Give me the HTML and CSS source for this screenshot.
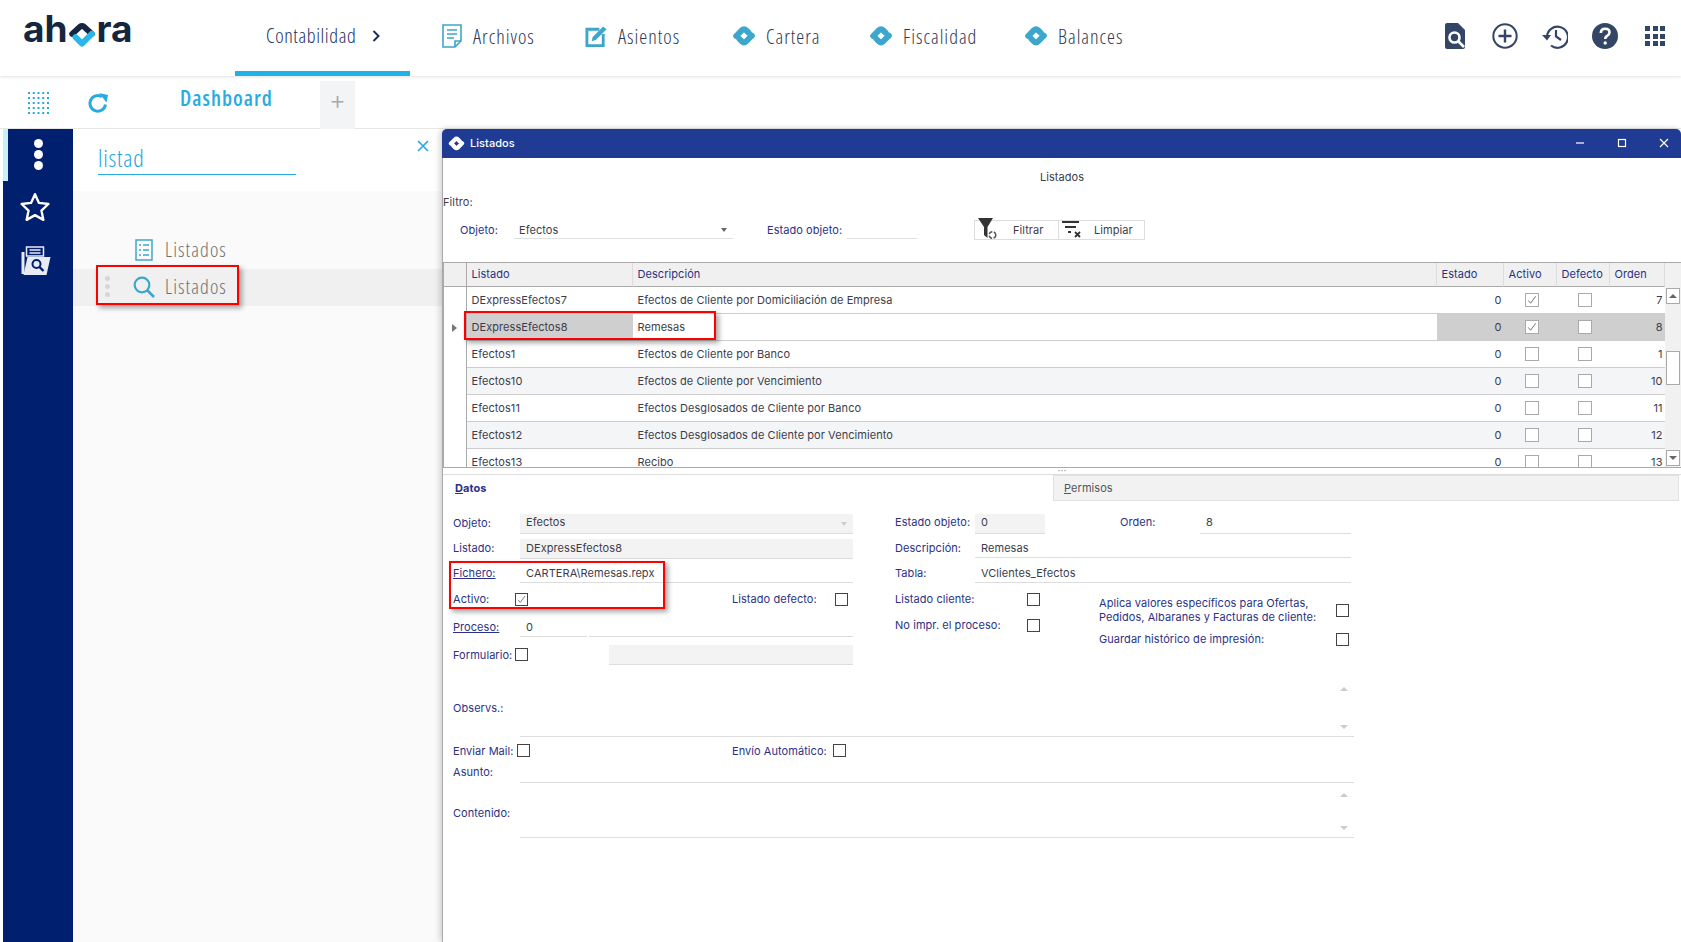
FILE: index.html
```html
<!DOCTYPE html>
<html lang="es">
<head>
<meta charset="utf-8">
<title>ahora - Listados</title>
<link rel="stylesheet" href="styles.css">
</head>
<body>
<svg class="defs" width="0" height="0" aria-hidden="true">
  <symbol id="dia" viewBox="0 0 24 24"><path d="M4.200 12 10 6.200Q12 4.200 14 6.200L16.500 8.700M7.500 15 10 17.500Q12 19.500 14 17.500L19.800 11.700" fill="none" stroke="currentColor" stroke-width="6" stroke-linecap="round" stroke-linejoin="round"/></symbol>
  <symbol id="chk" viewBox="0 0 13 13"><path d="M2.500 7 5 10 10.500 2.500" fill="none" stroke="#666" stroke-width="1"/></symbol>
</svg>
<header class="top">
  <div class="logo"><span>ah</span><svg class="logo-o" viewBox="0 0 24 24"><path d="M3 11 10 4.500Q12 3 14 4.500L21 11" fill="none" stroke="#14273f" stroke-width="5.500" stroke-linecap="round" stroke-linejoin="round"/><path d="M6 14 12 20 21 11" fill="none" stroke="#29b6e8" stroke-width="5.500" stroke-linecap="round" stroke-linejoin="round"/></svg><span>ra</span></div>
  <nav class="nav">
    <a class="nav-active">Contabilidad <svg class="chev" viewBox="0 0 8 12"><path d="M1.500 1 6.500 6 1.500 11" fill="none" stroke="#1c2f5e" stroke-width="2"/></svg></a>
    <a class="nav-i n1"><svg class="ic-file" viewBox="0 0 20 24"><path d="M1 1H19V17L13 23H1Z M13 23V17H19" fill="none" stroke="#3ca6cc" stroke-width="1.600"/><path d="M5 6H15M5 10H15M5 14H12" stroke="#3ca6cc" stroke-width="1.600"/></svg>Archivos</a>
    <a class="nav-i n2"><svg class="ic-edit" viewBox="0 0 24 24"><path d="M15 5H2V22H19V10" fill="none" stroke="#3ca6cc" stroke-width="3"/><path d="M8 13 19 2 22.500 5 11.500 16 7 17.500Z" fill="#3ca6cc"/></svg>Asientos</a>
    <a class="nav-i n3"><svg class="ic-dia"><use href="#dia"/></svg>Cartera</a>
    <a class="nav-i n4"><svg class="ic-dia"><use href="#dia"/></svg>Fiscalidad</a>
    <a class="nav-i n5"><svg class="ic-dia"><use href="#dia"/></svg>Balances</a>
  </nav>
  <div class="tools">
    <svg class="t-doc" viewBox="0 0 20 26"><path d="M2 0H13L20 7V24Q20 26 18 26H2Q0 26 0 24V2Q0 0 2 0Z" fill="#344666"/><circle cx="9.500" cy="14.500" r="5" fill="none" stroke="#fff" stroke-width="2.600"/><path d="M13 18 19 24" stroke="#fff" stroke-width="2.600"/></svg>
    <svg class="t-ic" viewBox="0 0 26 26"><circle cx="13" cy="13" r="11.700" fill="none" stroke="#344666" stroke-width="2"/><path d="M13 6.500V19.500M6.500 13H19.500" stroke="#344666" stroke-width="2.400"/></svg>
    <svg class="t-ic" viewBox="0 0 26 26"><path d="M5 14A10.500 10.500 0 1 1 9 22.500" fill="none" stroke="#344666" stroke-width="2.200"/><path d="M0 12H9L5 17.500Z" fill="#344666"/><path d="M14 7V13.500L19 17" fill="none" stroke="#344666" stroke-width="2.200"/></svg>
    <svg class="t-ic" viewBox="0 0 26 26"><circle cx="13" cy="13" r="13" fill="#344666"/><path d="M8.800 10Q9 5.800 13.200 5.800 17.500 5.800 17.500 9.500 17.500 11.500 15 13 13.200 14 13.200 16" fill="none" stroke="#fff" stroke-width="2.600"/><circle cx="13.200" cy="20" r="1.700" fill="#fff"/></svg>
    <div class="apps"><i></i><i></i><i></i><i></i><i></i><i></i><i></i><i></i><i></i></div>
  </div>
</header>
<div class="subbar">
  <svg class="sb-grid" viewBox="0 0 23 22"><path d="M1 1H22M1 6H22M1 11H22M1 16H22M1 21H22" stroke="#29abe2" stroke-width="2" stroke-dasharray="2 2.750"/></svg>
  <svg class="sb-ref" viewBox="0 0 20 20"><path d="M17.500 11.500A7.800 7.800 0 1 1 14 3.800" fill="none" stroke="#29abe2" stroke-width="3"/><path d="M11 0 20 2 18.500 9.500Z" fill="#29abe2"/></svg>
  <div class="tab-dash">Dashboard</div>
  <div class="tab-plus">+</div>
</div>
<main class="main">
  <aside class="rail">
    <div class="rail-dots"><i></i><i></i><i></i></div>
    <svg class="rail-star" viewBox="0 0 28 28"><path d="M14 2 17.700 10.200 26.500 11.200 20 17.300 21.800 26 14 21.600 6.200 26 8 17.300 1.500 11.200 10.300 10.200Z" fill="none" stroke="#fff" stroke-width="2.200" stroke-linejoin="round"/></svg>
    <svg class="rail-fold" viewBox="0 0 30 30"><path d="M1 6H4V28H1Z" fill="#e8ebf3"/><path d="M6 1H23V10H6Z" fill="none" stroke="#e8ebf3" stroke-width="1.500"/><path d="M9 4H20M9 7H20" stroke="#e8ebf3" stroke-width="1.500"/><path d="M7 11H30L26 29H3Z" fill="#e8ebf3"/><circle cx="16" cy="18" r="4" fill="none" stroke="#001f6f" stroke-width="2"/><path d="M19 21 23 25" stroke="#001f6f" stroke-width="2.400"/></svg>
  </aside>
  <section class="search">
    <div class="search-head">
      <div class="search-input">listad</div>
      <svg class="search-x" viewBox="0 0 12 12"><path d="M1 1 11 11M11 1 1 11" stroke="#29abe2" stroke-width="1.700"/></svg>
    </div>
    <div class="search-body">
      <div class="res">
        <svg class="res-list" viewBox="0 0 18 22"><rect x="1" y="1" width="16" height="20" fill="none" stroke="#3ca6cc" stroke-width="1.500"/><path d="M4 6H6M8 6H14M4 11H6M8 11H14M4 16H6M8 16H14" stroke="#3ca6cc" stroke-width="1.500"/></svg>
        <span>Listados</span>
      </div>
      <div class="res res-sel">
        <div class="grip"><i></i><i></i><i></i></div>
        <svg class="res-mag" viewBox="0 0 22 22"><circle cx="9" cy="9" r="7.300" fill="none" stroke="#3ca6cc" stroke-width="2.200"/><path d="M14 14 21 21" stroke="#3ca6cc" stroke-width="2.600"/></svg>
        <span>Listados</span>
      </div>
    </div>
  </section>
  <section class="win">
    <div class="win-title">
      <svg class="win-ic"><use href="#dia"/></svg>
      <span class="win-name">Listados</span>
      <div class="win-ctl">
        <svg viewBox="0 0 10 10"><path d="M1 5H9" stroke="#fff" stroke-width="1.200"/></svg>
        <svg viewBox="0 0 10 10"><rect x="1.500" y="1.500" width="7" height="7" fill="none" stroke="#fff" stroke-width="1.200"/></svg>
        <svg viewBox="0 0 10 10"><path d="M1 1 9 9M9 1 1 9" stroke="#fff" stroke-width="1.200"/></svg>
      </div>
    </div>
    <div class="win-cap">Listados</div>
    <div class="filtro">Filtro:</div>
    <div class="fbar">
      <span class="lb fb-l1">Objeto:</span>
      <span class="fb-sel">Efectos<i class="caret"></i></span>
      <span class="lb fb-l2">Estado objeto:</span>
      <span class="fb-est"></span>
      <div class="btns">
        <button class="btn btn-a"><svg class="btn-ic" viewBox="0 0 20 22"><path d="M0 0H15L9.500 9V20L6 17V9Z" fill="#333"/><circle cx="14.500" cy="17" r="3.300" fill="none" stroke="#555" stroke-width="1.500" stroke-dasharray="4 1.500"/></svg><span>Filtrar</span></button>
        <button class="btn btn-b"><svg class="btn-ic" viewBox="0 0 20 22"><path d="M0 4H17M3 9H14M6 14H9" stroke="#333" stroke-width="1.800"/><path d="M13 14 18 19M18 14 13 19" stroke="#333" stroke-width="1.800"/></svg><span>Limpiar</span></button>
      </div>
    </div>
    <div class="grid">
      <div class="grid-main">
        <div class="g-row g-head">
          <div class="c"></div><div class="c">Listado</div><div class="c">Descripción</div><div class="c">Estado</div><div class="c">Activo</div><div class="c">Defecto</div><div class="c">Orden</div>
        </div>
        <div class="g-row">
          <div class="c ind"></div><div class="c">DExpressEfectos7</div><div class="c">Efectos de Cliente por Domiciliación de Empresa</div><div class="c r">0</div><div class="c m"><span class="cb"><svg><use href="#chk"/></svg></span></div><div class="c m"><span class="cb"></span></div><div class="c r">7</div>
        </div>
        <div class="g-row g-sel">
          <div class="c ind"><i class="tri"></i></div><div class="c s">DExpressEfectos8</div><div class="c">Remesas</div><div class="c r s">0</div><div class="c m s"><span class="cb"><svg><use href="#chk"/></svg></span></div><div class="c m s"><span class="cb"></span></div><div class="c r s">8</div>
        </div>
        <div class="g-row">
          <div class="c ind"></div><div class="c">Efectos1</div><div class="c">Efectos de Cliente por Banco</div><div class="c r">0</div><div class="c m"><span class="cb"></span></div><div class="c m"><span class="cb"></span></div><div class="c r">1</div>
        </div>
        <div class="g-row g-alt">
          <div class="c ind"></div><div class="c">Efectos10</div><div class="c">Efectos de Cliente por Vencimiento</div><div class="c r">0</div><div class="c m"><span class="cb"></span></div><div class="c m"><span class="cb"></span></div><div class="c r">10</div>
        </div>
        <div class="g-row">
          <div class="c ind"></div><div class="c">Efectos11</div><div class="c">Efectos Desglosados de Cliente por Banco</div><div class="c r">0</div><div class="c m"><span class="cb"></span></div><div class="c m"><span class="cb"></span></div><div class="c r">11</div>
        </div>
        <div class="g-row g-alt">
          <div class="c ind"></div><div class="c">Efectos12</div><div class="c">Efectos Desglosados de Cliente por Vencimiento</div><div class="c r">0</div><div class="c m"><span class="cb"></span></div><div class="c m"><span class="cb"></span></div><div class="c r">12</div>
        </div>
        <div class="g-row">
          <div class="c ind"></div><div class="c">Efectos13</div><div class="c">Recibo</div><div class="c r">0</div><div class="c m"><span class="cb"></span></div><div class="c m"><span class="cb"></span></div><div class="c r">13</div>
        </div>
      </div>
      <div class="vbar">
        <div class="vb-btn"><i class="up"></i></div>
        <div class="vb-thumb"></div>
        <div class="vb-btn vb-end"><i class="down"></i></div>
      </div>
    </div>
    <div class="split">···</div>
    <div class="tabs">
      <div class="tab tab-on"><u>D</u>atos</div>
      <div class="tab tab-off"><u>P</u>ermisos</div>
    </div>
    <div class="form">
      <div class="form-top">
        <div class="col-l">
          <div class="fr fr-std"><span class="lb">Objeto:</span><span class="fd ro">Efectos<i class="caret car-l"></i></span></div>
          <div class="fr fr-std"><span class="lb">Listado:</span><span class="fd ro">DExpressEfectos8</span></div>
          <div class="fr fr-std"><span class="lb lk">Fichero:</span><span class="fd">CARTERA\Remesas.repx</span></div>
          <div class="fr fr-chk"><span class="lb">Activo:</span><span class="ck"><svg><use href="#chk"/></svg></span><span></span><span class="lb">Listado defecto:</span><span class="ck"></span></div>
          <div class="fr fr-pro"><span class="lb lk">Proceso:</span><span class="fd">0</span><span></span><span class="fd"></span></div>
          <div class="fr fr-frm"><span class="lb">Formulario:</span><span class="ck"></span><span></span><span class="fd ro"></span></div>
        </div>
        <div class="col-m">
          <div class="fr fr-est"><span class="lb">Estado objeto:</span><span class="fd ro">0</span><span></span><span class="lb">Orden:</span><span class="fd">8</span></div>
          <div class="fr fr-m"><span class="lb">Descripción:</span><span class="fd">Remesas</span></div>
          <div class="fr fr-m"><span class="lb">Tabla:</span><span class="fd">VClientes_Efectos</span></div>
          <div class="checks">
            <div class="checks-l">
              <div class="ckrow ck1"><span class="lb">Listado cliente:</span><span class="ck"></span></div>
              <div class="ckrow ck2"><span class="lb">No impr. el proceso:</span><span class="ck"></span></div>
            </div>
            <div class="checks-r">
              <div class="ckrow ck3"><span class="lb">Aplica valores específicos para Ofertas,<br>Pedidos, Albaranes y Facturas de cliente:</span><span class="ck"></span></div>
              <div class="ckrow ck4"><span class="lb">Guardar histórico de impresión:</span><span class="ck"></span></div>
            </div>
          </div>
        </div>
      </div>
      <div class="area ar1"><span class="lb">Observs.:</span><div class="memo"><i class="up pale"></i><i class="down pale"></i></div></div>
      <div class="fr-mail"><span class="lb">Enviar Mail:</span><span class="ck"></span><span></span><span class="lb">Envío Automático:</span><span class="ck"></span></div>
      <div class="area ar2"><span class="lb">Asunto:</span><div class="memo"></div></div>
      <div class="area ar3"><span class="lb">Contenido:</span><div class="memo"><i class="up pale"></i><i class="down pale"></i></div></div>
    </div>
  </section>
</main>
<div class="mark m1"></div>
<div class="mark m2"></div>
<div class="mark m3"></div>
</body>
</html>
```
FILE: styles.css
```css
* { box-sizing: border-box; }
html, body { margin: 0; height: 942px; overflow: hidden; background: #fff; }
body { font-family: Inter, "Liberation Sans", sans-serif; font-size: 11px; letter-spacing: .06px; color: #3d3d4a; position: relative; }
.defs { position: absolute; }

/* top bar */
.top { height: 76px; display: flex; position: relative; z-index: 3; background: #fff; box-shadow: 0 1px 3px rgba(0,0,0,.12); }
.logo { width: 235px; padding: 5px 0 0 23px; display: flex; align-items: flex-start; font-size: 37px; font-weight: 650; line-height: 47px; color: #14273f; letter-spacing: 0; }
.logo-o { width: 26px; height: 26px; margin: 17px 2px 0 1px; flex: none; }
.nav { flex: 1; display: flex; font-family: "Open Sans", Roboto, sans-serif; font-stretch: 75%; font-weight: 300; letter-spacing: 1px; font-size: 20px; color: #2e3753; }
.nav a { display: flex; align-items: center; height: 72px; flex: none; }
.nav-active { width: 175px; padding-left: 31px; border-bottom: 5px solid #20b2e6; height: 76px !important; color: #1c2f5e; letter-spacing: .62px; }
.chev { width: 8px; height: 12px; margin-left: 16px; }
.n1 { margin-left: 32px; width: 143px; }
.n2 { width: 147px; }
.n3 { width: 137px; }
.n4 { width: 155px; }
.n5 { width: 110px; }
.ic-file { width: 20px; height: 24px; margin-right: 11px; }
.ic-edit { width: 23px; height: 24px; margin-right: 10px; }
.ic-dia { width: 24px; height: 24px; margin-right: 10px; color: #3ca6cc; }
.tools { display: flex; align-items: center; padding: 0 16px 4px 0; gap: 24px; }
.t-doc { width: 20px; height: 26px; margin-right: 3px; }
.t-ic { width: 26px; height: 26px; }
.apps { width: 20px; height: 20px; margin-left: 3px; display: grid; grid-template-columns: repeat(3, 5px); grid-template-rows: repeat(3, 5px); gap: 2.5px; }
.apps i { background: #344666; }

/* second bar */
.subbar { height: 53px; display: flex; align-items: flex-start; background: #fff; border-bottom: 1px solid #e6e6e6; }
.sb-grid { width: 23px; height: 22px; margin: 16px 0 0 27px; }
.sb-ref { width: 20px; height: 20px; margin: 17px 0 0 38px; }
.tab-dash { width: 187px; height: 53px; margin-left: 25px; padding: 10px 0 0 47px; font-family: "Open Sans", Roboto, sans-serif; font-stretch: 75%; font-size: 21px; line-height: 25px; font-weight: 600; letter-spacing: 1px; color: #29abe2; }
.tab-plus { width: 35px; height: 48px; margin-top: 5px; background: #f3f4f6; text-align: center; color: #a5a8ad; font-size: 26px; font-weight: 300; line-height: 38px; }

.main { height: 813px; display: flex; padding-left: 3px; }

/* rail */
.rail { width: 70px; background: #001f6f; position: relative; display: flex; flex-direction: column; align-items: center; flex: none; }
.rail::before { content: ""; position: absolute; left: 0; top: 0; width: 5px; height: 52px; background: #c9f0f8; }
.rail-dots { margin: 10px 0 0 0; display: flex; flex-direction: column; gap: 2px; }
.rail-dots i { width: 9px; height: 9px; border-radius: 50%; background: #fff; display: block; }
.rail-star { width: 30px; height: 30px; margin: 22px 6px 0 0; }
.rail-fold { width: 31px; height: 30px; margin: 24px 6px 0 0; }

/* search */
.search { width: 369px; flex: none; display: flex; flex-direction: column; }
.search-head { height: 62px; display: flex; padding-left: 25px; background: #fff; }
.search-input { width: 198px; height: 46px; padding-top: 15px; border-bottom: 1px solid #29abe2; font-family: "Open Sans", Roboto, sans-serif; font-stretch: 75%; font-weight: 300; font-size: 24px; line-height: 27px; letter-spacing: .8px; color: #1ea4dc; }
.search-x { width: 12px; height: 12px; margin: 11px 0 0 121px; }
.search-body { flex: 1; background: #fafafa; padding-top: 41px; }
.res { height: 37px; padding-bottom: 2px; display: flex; align-items: center; font-family: "Open Sans", Roboto, sans-serif; font-stretch: 75%; font-size: 20px; font-weight: 300; letter-spacing: 1.1px; color: #6f6f6f; }
.res-list { width: 18px; height: 22px; margin: 0 12px 0 62px; }
.res-sel { background: #f0f0f0; }
.grip { width: 5px; margin-left: 32px; display: flex; flex-direction: column; gap: 3px; }
.grip i { width: 5px; height: 5px; border-radius: 50%; background: #d6d6d6; display: block; }
.res-mag { width: 22px; height: 22px; margin: 0 10px 0 23px; }

/* window */
.win { flex: 1; min-width: 0; border-left: 1.5px solid #aaa; background: #fff; position: relative; box-shadow: -2px 0 6px rgba(0,0,0,.18); border-radius: 5px 5px 0 0; }
.win-title { height: 29px; background: #1f3b94; color: #fff; display: flex; align-items: center; padding: 0 0 1px 6px; border-radius: 5px 5px 0 0; margin-left: -1px; }
.win-ic { width: 17px; height: 17px; color: #fff; flex: none; }
.win-name { margin-left: 5px; font-weight: 500; }
.win-ctl { margin-left: auto; display: flex; gap: 32px; padding-right: 12px; }
.win-ctl svg { width: 10px; height: 10px; }
.win-cap { height: 37px; padding: 11px 0 0 0; line-height: 16px; text-align: center; }
.filtro { height: 19px; line-height: 15px; color: #3d3d4a; }
.fbar { height: 42px; display: flex; align-items: flex-start; padding: 0 0 0 17px; margin-top: 6px; }
.lb { color: #2a3285; white-space: nowrap; line-height: 16px; }
.fb-l1 { width: 54px; padding-top: 2px; }
.fb-sel { width: 219px; height: 19px; border-bottom: 1px solid #e0e0e0; padding: 2px 0 0 5px; line-height: 16px; position: relative; }
.caret { position: absolute; right: 6px; top: 8px; width: 0; height: 0; border: 3.5px solid transparent; border-top: 4px solid #666; border-bottom: 0; }
.fb-l2 { margin-left: 34px; width: 80px; padding-top: 2px; }
.fb-est { width: 70px; height: 19px; border-bottom: 1px solid #e0e0e0; }
.btns { display: flex; margin: 0 0 0 57px; }
.btn { font: inherit; letter-spacing: inherit; color: #3d3d4a; height: 20px; width: 85px; padding: 0; background: #fff; border: 1px solid #ddd; display: flex; align-items: center; position: relative; }
.btn-b { width: 86px; border-left: 0; }
.btn-ic { width: 20px; height: 22px; margin-left: 3px; flex: none; align-self: flex-start; margin-top: -3px; }
.btn span { margin-left: 15px; }
.btn-b span { margin-left: 12px; }

/* data grid */
.grid { height: 206px; margin-left: -.5px; display: flex; border-top: 1px solid #aaa; border-bottom: 1px solid #aaa; border-left: 1px solid #aaa; overflow: hidden; }
.grid-main { width: 1221px; flex: none; }
.g-row { display: grid; grid-template-columns: 23px 166px 804px 67px 53px 53px 55px; height: 27px; }
.c { padding: 0 4px 0 5px; display: flex; align-items: center; border-bottom: 1px solid #ccc; min-width: 0; white-space: nowrap; }
.ind { border-bottom: 0; border-right: 1px solid #aaa; padding: 0; background: #fff; justify-content: center; }
.r { justify-content: flex-end; padding-right: 2px; }
.m { justify-content: center; padding-left: 6px; padding-right: 3px; }
.g-head { height: 24px; background: #f0f0f0; }
.g-head .c { color: #2a3285; border-bottom: 1px solid #aaa; border-right: 1px solid #ddd; background: #f0f0f0; padding-bottom: 2px; }
.g-head .c:first-child { border-right: 1px solid #aaa; }
.g-alt .c:not(.ind) { background: #f3f5f7; }
.s { background: #cfcfcf; }
.tri { width: 0; height: 0; border: 4px solid transparent; border-left: 5px solid #777; border-right: 0; }
.cb { width: 14px; height: 14px; border: 1px solid #aaa; background: #fff; display: block; }
.cb svg { width: 12px; height: 12px; display: block; }
.vbar { flex: 1; background: #f1f1f1; display: flex; flex-direction: column; padding: 0 1px; }
.vb-btn { height: 16px; background: #fff; border: 1px solid #aaa; margin-top: 25px; display: flex; align-items: center; justify-content: center; }
.vb-thumb { height: 34px; margin-top: 47px; background: #fff; border: 1px solid #aaa; }
.vb-end { margin-top: auto; margin-bottom: 1px; }
.up, .down { display: block; width: 0; height: 0; border: 4px solid transparent; }
.up { border-top: 0; border-bottom: 4px solid #666; }
.down { border-bottom: 0; border-top: 4px solid #666; }
.pale.up { border-bottom-color: #ccc; }
.pale.down { border-top-color: #ccc; }

/* tabs */
.split { height: 6px; line-height: 5px; text-align: center; color: #999; font-size: 10px; }
.tabs { height: 27px; display: flex; border-top: 1px solid #ddd; }
.tab { padding: 5px 0 0 12px; line-height: 16px; }
.tab-on { width: 610px; font-weight: 700; color: #2a3285; }
.tab-off { width: 626px; padding: 4px 0 0 10px; background: #f2f2f2; border: 1px solid #e2e2e2; color: #555; }

/* form */
.form { padding: 13px 0 0 10px; }
.form-top { display: flex; }
.col-l { width: 400px; }
.col-m { width: 456px; margin-left: 42px; }
.fr { display: grid; align-items: end; }
.fr > * { height: 20px; line-height: 19px; }
.fd { border-bottom: 1px solid #ddd; padding-left: 6px; white-space: nowrap; position: relative; }
.ro { background: #f3f3f3; }
.lk { text-decoration: underline; }
.col-l .fr-std { grid-template-columns: 67px 333px; }
.col-l .fr-std:nth-child(1) { height: 20px; }
.col-l .fr-std:nth-child(1) > .fd { line-height: 17px; }
.col-l .fr-std:nth-child(2) { height: 25px; }
.col-l .fr-std:nth-child(3) { height: 24px; }
.col-l .fr-std:nth-child(3) > *, .fr-pro > *, .fr-frm > *, .fr-m > * { line-height: 21px; }
.car-l { border-top-color: #ccc; top: 8px; }
.ck { display: block; width: 13px !important; height: 13px !important; border: 1px solid #444; background: #fff; flex: none; }
.ck svg { width: 11px; height: 11px; display: block; }
.fr-chk { grid-template-columns: 62px 13px 204px 103px 13px; height: 27px; }
.fr-chk .ck, .fr-frm .ck { margin-bottom: 4px; }
.fr-pro { grid-template-columns: 67px 67px 2px 264px; height: 27px; }
.fr-frm { grid-template-columns: 62px 13px 81px 244px; height: 28px; }
.fr-est { grid-template-columns: 80px 70px 75px 80px 151px; height: 20px; }
.fr-est > * { line-height: 17px; }
.fr-m { grid-template-columns: 80px 376px; }
.col-m .fr-m:nth-child(2) { height: 24px; }
.col-m .fr-m:nth-child(3) { height: 25px; }
.checks { display: flex; margin-top: -1px; }
.checks-l { width: 145px; flex: none; }
.checks-r { margin-left: 59px; width: 250px; flex: none; }
.ckrow { display: flex; justify-content: space-between; }
.ck1, .ck2 { height: 26px; padding-top: 9px; }
.ck1 .ck, .ck2 .ck { margin-top: 2px; }
.ck3 { height: 49px; padding-top: 14px; }
.ck3 .lb { line-height: 14px; }
.ck3 .ck { margin-top: 8px; }
.ck4 .ck { margin-top: 2px; }
.area { display: grid; grid-template-columns: 67px 834px; }
.memo { border-bottom: 1px solid #ddd; display: flex; flex-direction: column; justify-content: space-between; align-items: flex-end; padding: 11px 6px 7px 0; }
.ar1 { height: 72px; }
.ar1 .memo { padding-top: 22px; }
.ar1 .lb { align-self: center; padding-top: 14px; }
.fr-mail { display: grid; grid-template-columns: 64px 13px 202px 101px 13px; height: 27px; align-items: center; }
.ar2 { height: 18px; }
.ar3 { height: 56px; }
.ar3 .lb { align-self: center; padding-top: 6px; }

/* annotations over the content */
.mark { position: absolute; border: 2.5px solid #f00; box-shadow: 3px 3px 5px rgba(0,0,0,.35); pointer-events: none; z-index: 5; }
.m1 { left: 96px; top: 265px; width: 143px; height: 40px; }
.m2 { left: 464px; top: 311px; width: 252px; height: 29px; }
.m3 { left: 449px; top: 561px; width: 216px; height: 48px; }
```
